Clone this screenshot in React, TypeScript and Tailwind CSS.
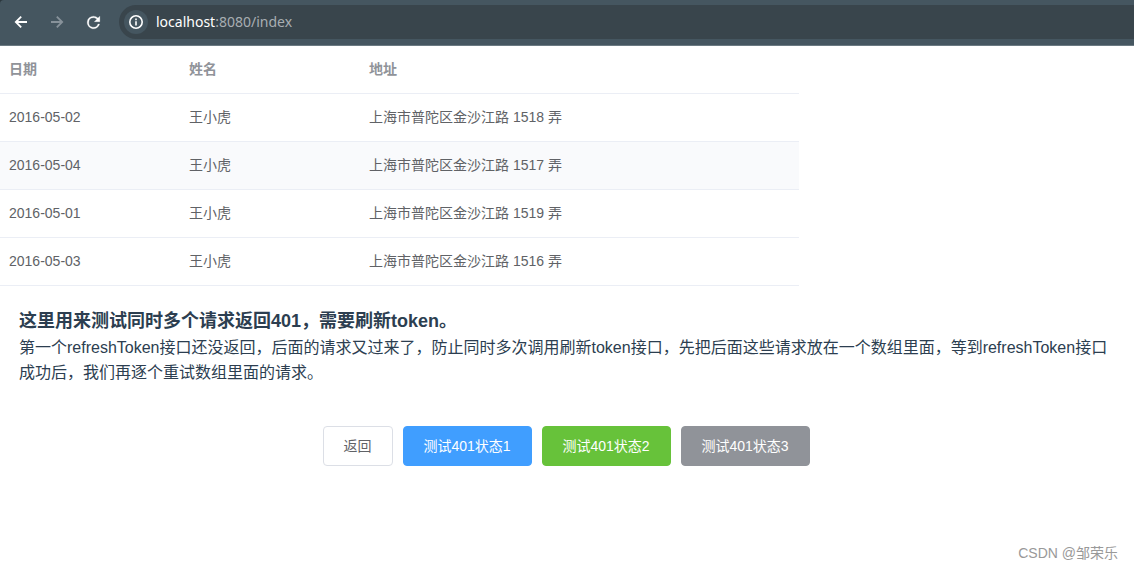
const rows = [
  { date: "2016-05-02", name: "王小虎", address: "上海市普陀区金沙江路 1518 弄" },
  { date: "2016-05-04", name: "王小虎", address: "上海市普陀区金沙江路 1517 弄", hovered: true },
  { date: "2016-05-01", name: "王小虎", address: "上海市普陀区金沙江路 1519 弄" },
  { date: "2016-05-03", name: "王小虎", address: "上海市普陀区金沙江路 1516 弄" },
];

function BackIcon() {
  return (
    <svg viewBox="0 0 16 16" className="size-4" fill="none" stroke="currentColor" strokeWidth="1.8" aria-hidden="true">
      <path d="M14 8H3M8.2 2.6L2.8 8l5.4 5.4" />
    </svg>
  );
}

function ForwardIcon() {
  return (
    <svg viewBox="0 0 16 16" className="size-4" fill="none" stroke="currentColor" strokeWidth="1.8" aria-hidden="true">
      <path d="M2 8h11M7.8 2.6L13.2 8l-5.4 5.4" />
    </svg>
  );
}

function ReloadIcon() {
  return (
    <svg viewBox="0 0 24 24" className="size-[19px]" fill="currentColor" stroke="currentColor" strokeWidth="0.3" aria-hidden="true">
      <path d="M17.65 6.35A7.96 7.96 0 0 0 12 4a8 8 0 1 0 7.73 10h-2.08A6 6 0 1 1 12 6c1.66 0 3.14.69 4.22 1.78L13 11h7V4z" />
    </svg>
  );
}

function InfoIcon() {
  return (
    <svg viewBox="0 0 16 16" className="size-4" fill="none" stroke="currentColor" strokeWidth="1.6" aria-hidden="true">
      <circle cx="8" cy="8" r="6.2" />
      <path d="M8 7.2V11.4M8 4.6V6.2" />
    </svg>
  );
}

function BrowserBar() {
  return (
    <div className="bg-[#2b373d]">
      <header className="flex h-[46px] items-center rounded-tl-[4px] border-b border-[#6b7a82] bg-[#455660] pb-px pl-[11px] text-white">
        <button type="button" aria-label="Back" className="flex size-5 items-center justify-center">
          <BackIcon />
        </button>
        <button type="button" aria-label="Forward" className="ml-4 flex size-5 items-center justify-center text-[#87929a]">
          <ForwardIcon />
        </button>
        <button type="button" aria-label="Reload" className="ml-4 flex size-5 items-center justify-center">
          <ReloadIcon />
        </button>
        <div className="ml-4 flex h-[34px] flex-1 items-center rounded-l-full bg-[#39454c] pl-[5px]">
          <button type="button" aria-label="Site information" className="flex size-6 items-center justify-center rounded-full bg-[#455660]">
            <InfoIcon />
          </button>
          <span className="ml-2 font-['Noto_Sans','Open_Sans',sans-serif] text-sm text-[#a8aeb2]">
            <span className="text-white">localhost</span>:8080/index
          </span>
        </div>
      </header>
    </div>
  );
}

const cell = "h-12 border-b border-[#ebeef5] px-[9px] pb-0.5";
const buttonBase = "h-10 rounded-[4px] border px-[19px] text-sm";

export default function App() {
  return (
    <div className="flex min-h-screen flex-col bg-white font-['Liberation_Sans','Noto_Sans_CJK_SC',sans-serif] text-[#2c3e50]">
      <BrowserBar />
      <main className="flex-1">
        <table className="w-full max-w-[799px] table-fixed border-separate border-spacing-0 text-left text-sm text-[#606266]">
          <thead className="text-[#909399]">
            <tr>
              <th className={`${cell} w-[180px]`}>日期</th>
              <th className={`${cell} w-[180px]`}>姓名</th>
              <th className={cell}>地址</th>
            </tr>
          </thead>
          <tbody>
            {rows.map((row) => (
              <tr key={row.date} className={row.hovered ? "bg-[#f9fafc]" : "bg-white"}>
                <td className={cell}>{row.date}</td>
                <td className={cell}>{row.name}</td>
                <td className={cell}>{row.address}</td>
              </tr>
            ))}
          </tbody>
        </table>
        <section className="px-[19px] pt-[21px]">
          <h3 className="text-lg/[28px] font-bold">这里用来测试同时多个请求返回401，需要刷新token。</h3>
          <p className="text-base/[25px]">
            第一个refreshToken接口还没返回，后面的请求又过来了，防止同时多次调用刷新token接口，先把后面这些请求放在一个数组里面，等到refreshToken接口成功后，我们再逐个重试数组里面的请求。
          </p>
        </section>
        <div className="flex justify-center gap-[10px] pt-[41px] pr-0.5">
          <button type="button" className={`${buttonBase} min-w-[70px] border-[#dcdfe6] bg-white text-[#606266]`}>返回</button>
          <button type="button" className={`${buttonBase} min-w-[129px] border-[#409eff] bg-[#409eff] text-white`}>测试401状态1</button>
          <button type="button" className={`${buttonBase} min-w-[129px] border-[#67c23a] bg-[#67c23a] text-white`}>测试401状态2</button>
          <button type="button" className={`${buttonBase} min-w-[129px] border-[#909399] bg-[#909399] text-white`}>测试401状态3</button>
        </div>
      </main>
      <footer className="px-4 pb-[6px] text-right text-sm text-[#999999]">CSDN @邹荣乐</footer>
    </div>
  );
}
